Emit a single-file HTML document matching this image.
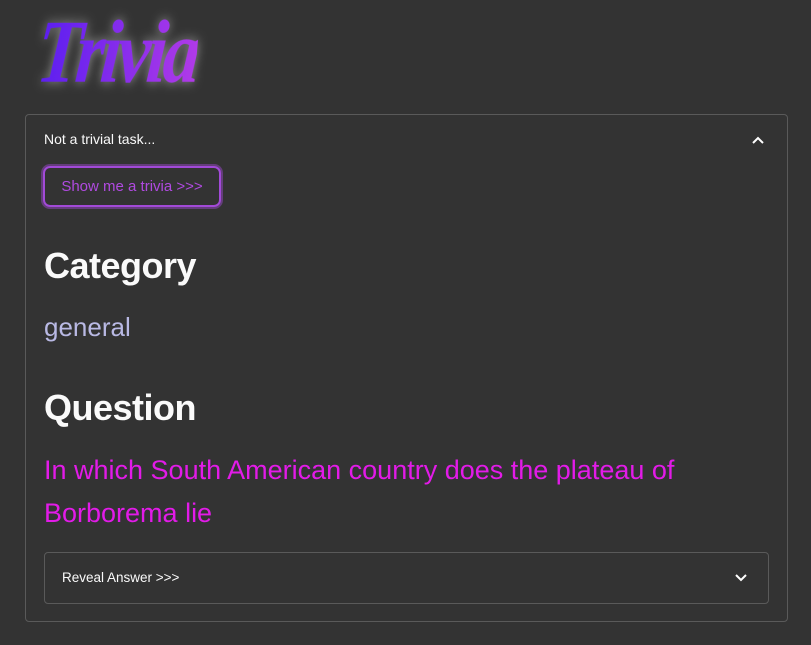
<!DOCTYPE html>
<html><head><style>
body{margin:0;background:#333333;width:811px;height:645px;overflow:hidden;font-family:"Liberation Sans",sans-serif;position:relative}
.logo{position:absolute;left:42px;top:0px;font-family:"Liberation Serif",serif;font-style:italic;font-weight:bold;font-size:78px;letter-spacing:-4px;background:linear-gradient(90deg,#5a1ef0,#b03ae8);-webkit-background-clip:text;color:transparent;filter:drop-shadow(0 0 5px rgba(255,255,255,0.45));transform:scale(0.95,1.15) skewX(-6deg);transform-origin:left top}
.box{position:absolute;left:25px;top:114px;width:761px;height:506px;border:1px solid #5a5a5a;border-radius:4px}
.sum{position:absolute;left:44px;top:131px;color:#fafafa;font-size:14px}
.chev{position:absolute;}
.btn{position:absolute;left:43px;top:166px;border:2px solid #a24ad8;border-radius:7px;box-shadow:0 0 0 2px rgba(162,74,216,0.45);color:#b04ae0;font-size:15px;line-height:38px;text-align:center;box-sizing:border-box;height:41px;width:178px}
h2{position:absolute;left:44px;margin:0;color:#fafafa;font-size:36px;font-weight:bold;font-family:"Liberation Sans",sans-serif;letter-spacing:-0.5px}
.gen{position:absolute;left:44px;top:312px;color:#b9b9e4;font-size:26px}
.q{position:absolute;left:44px;top:449px;width:700px;color:#e21be8;font-size:27px;line-height:43px}
.ans{position:absolute;left:44px;top:552px;width:723px;height:50px;border:1px solid #5a5a5a;border-radius:4px}
.ans span{position:absolute;left:17px;top:17px;color:#fafafa;font-size:13.5px}
</style></head><body>
<div class="logo">Trivia</div>
<div class="box"></div>
<div class="sum">Not a trivial task...</div>
<svg class="chev" style="left:751px;top:135px" width="14" height="10"><path d="M2 8 L7 3 L12 8" stroke="#fff" stroke-width="2" fill="none"/></svg>
<div class="btn">Show me a trivia &gt;&gt;&gt;</div>
<h2 style="top:245px">Category</h2>
<div class="gen">general</div>
<h2 style="top:387px">Question</h2>
<div class="q">In which South American country does the plateau of Borborema lie</div>
<div class="ans"><span>Reveal Answer &gt;&gt;&gt;</span>
<svg style="position:absolute;left:689px;top:20px" width="14" height="10"><path d="M2 2 L7 7 L12 2" stroke="#fff" stroke-width="2" fill="none"/></svg></div>
</body></html>
